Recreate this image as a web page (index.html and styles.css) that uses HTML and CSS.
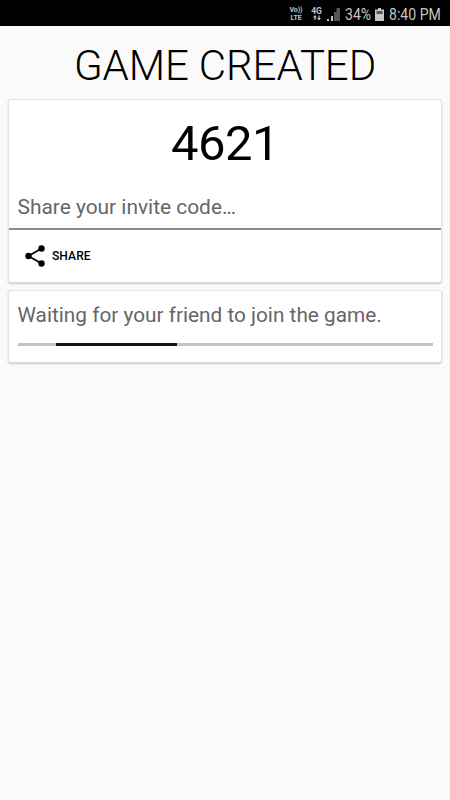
FILE: index.html
```html
<!DOCTYPE html>
<html lang="en">
<head>
<meta charset="utf-8">
<title>Game Created</title>
<link rel="stylesheet" href="styles.css">
</head>
<body>
<header class="status">
  <span class="volte"><span>Vo))</span><span>LTE</span></span>
  <span class="network"><span>4G</span><svg width="10" height="6" viewBox="0 0 10 6"><path d="M1 2.500L3 0 5 2.500H3.600V5H2.400V2.500zM5 3H6.400V.500H7.600V3H9L7 5.500z" fill="#c4c4c4"/></svg></span>
  <svg class="signal" width="13" height="13" viewBox="0 0 13 13"><path d="M0 11h2v2H0zM4 8h2v5H4z" fill="#c4c4c4"/><path d="M7 4h2.500v9H7zM9.500 0h3.500v13h-3.500z" fill="#555"/></svg>
  <span class="percent">34%</span>
  <svg class="battery" width="9" height="13" viewBox="0 0 9 13"><path d="M3 0h3v1.500h3V13H0V1.500h3z" fill="#c4c4c4"/><path d="M1.500 3h6v3h-6z" fill="#555"/></svg>
  <time class="clock">8:40 PM</time>
</header>
<main>
  <h1>GAME CREATED</h1>
  <section class="card invite">
    <div class="code">4621</div>
    <p class="hint">Share your invite code…</p>
    <button class="share"><svg width="24" height="24" viewBox="0 0 24 24"><path d="M18.500 4.500L5.500 12l13 7.500" fill="none" stroke="#000" stroke-width="1.800"/><circle cx="18.500" cy="4.500" r="3.200"/><circle cx="5.500" cy="12" r="3.200"/><circle cx="18.500" cy="19.500" r="3.200"/></svg><span>SHARE</span></button>
  </section>
  <section class="card waiting">
    <p>Waiting for your friend to join the game.</p>
    <div class="track"><div class="bar"></div></div>
  </section>
</main>
</body>
</html>
```
FILE: styles.css
```css
* { box-sizing: border-box; }
body { margin: 0; min-height: 800px; background: #fafafa; color: #000; font-family: Roboto, sans-serif; }
h1, p { margin: 0; font-weight: 400; }
.status { height: 26px; padding: 2px 9px 0 0; background: #000; color: #c4c4c4; display: flex; align-items: center; justify-content: flex-end; font-size: 16px; white-space: nowrap; }
.volte, .network { display: flex; flex-direction: column; align-items: center; line-height: 8px; font-weight: 700; }
.volte { width: 14px; margin-right: 8px; font-size: 7px; letter-spacing: -.1px; }
.network { width: 11px; margin-right: 5px; font-size: 8.500px; }
.signal { margin-right: 5px; }
.percent, .clock { transform: scaleX(.88); transform-origin: left; }
.percent { width: 26px; }
.clock { width: 52px; }
.battery { margin: 0 5px 0 4px; }
main { padding: 0 8px; }
h1 { height: 73px; padding-top: 14px; font-size: 42px; line-height: 52px; font-weight: 300; letter-spacing: -.1px; text-align: center; white-space: nowrap; }
.card { background: #fff; border: 1px solid #e5e5e5; border-bottom-color: #d8d8d8; border-radius: 3px; box-shadow: 0 1px 2px rgba(0,0,0,.2); }
.invite { height: 184px; }
.code { height: 86px; padding: 13px 0 0; line-height: 61px; font-size: 49px; font-weight: 400; letter-spacing: -.5px; text-align: center; }
.hint { height: 44px; padding: 6px 8.500px; border-bottom: 2px solid #8c8c8c; font-size: 20.900px; line-height: 30px; color: #666; }
.share { height: 52px; margin: 0; padding: 0 0 0 14px; border: 0; background: none; color: #000; font: 500 12px Roboto, sans-serif; letter-spacing: .1px; display: flex; align-items: center; gap: 5px; }
.waiting { height: 73px; margin-top: 7px; padding: 9px 8px 0 8.500px; }
.waiting p { height: 43px; font-size: 20.800px; line-height: 30px; color: #666; white-space: nowrap; }
.track { height: 3px; background: #c4c4c4; }
.bar { width: 121px; height: 3px; margin-left: 38px; background: #151515; }
```
